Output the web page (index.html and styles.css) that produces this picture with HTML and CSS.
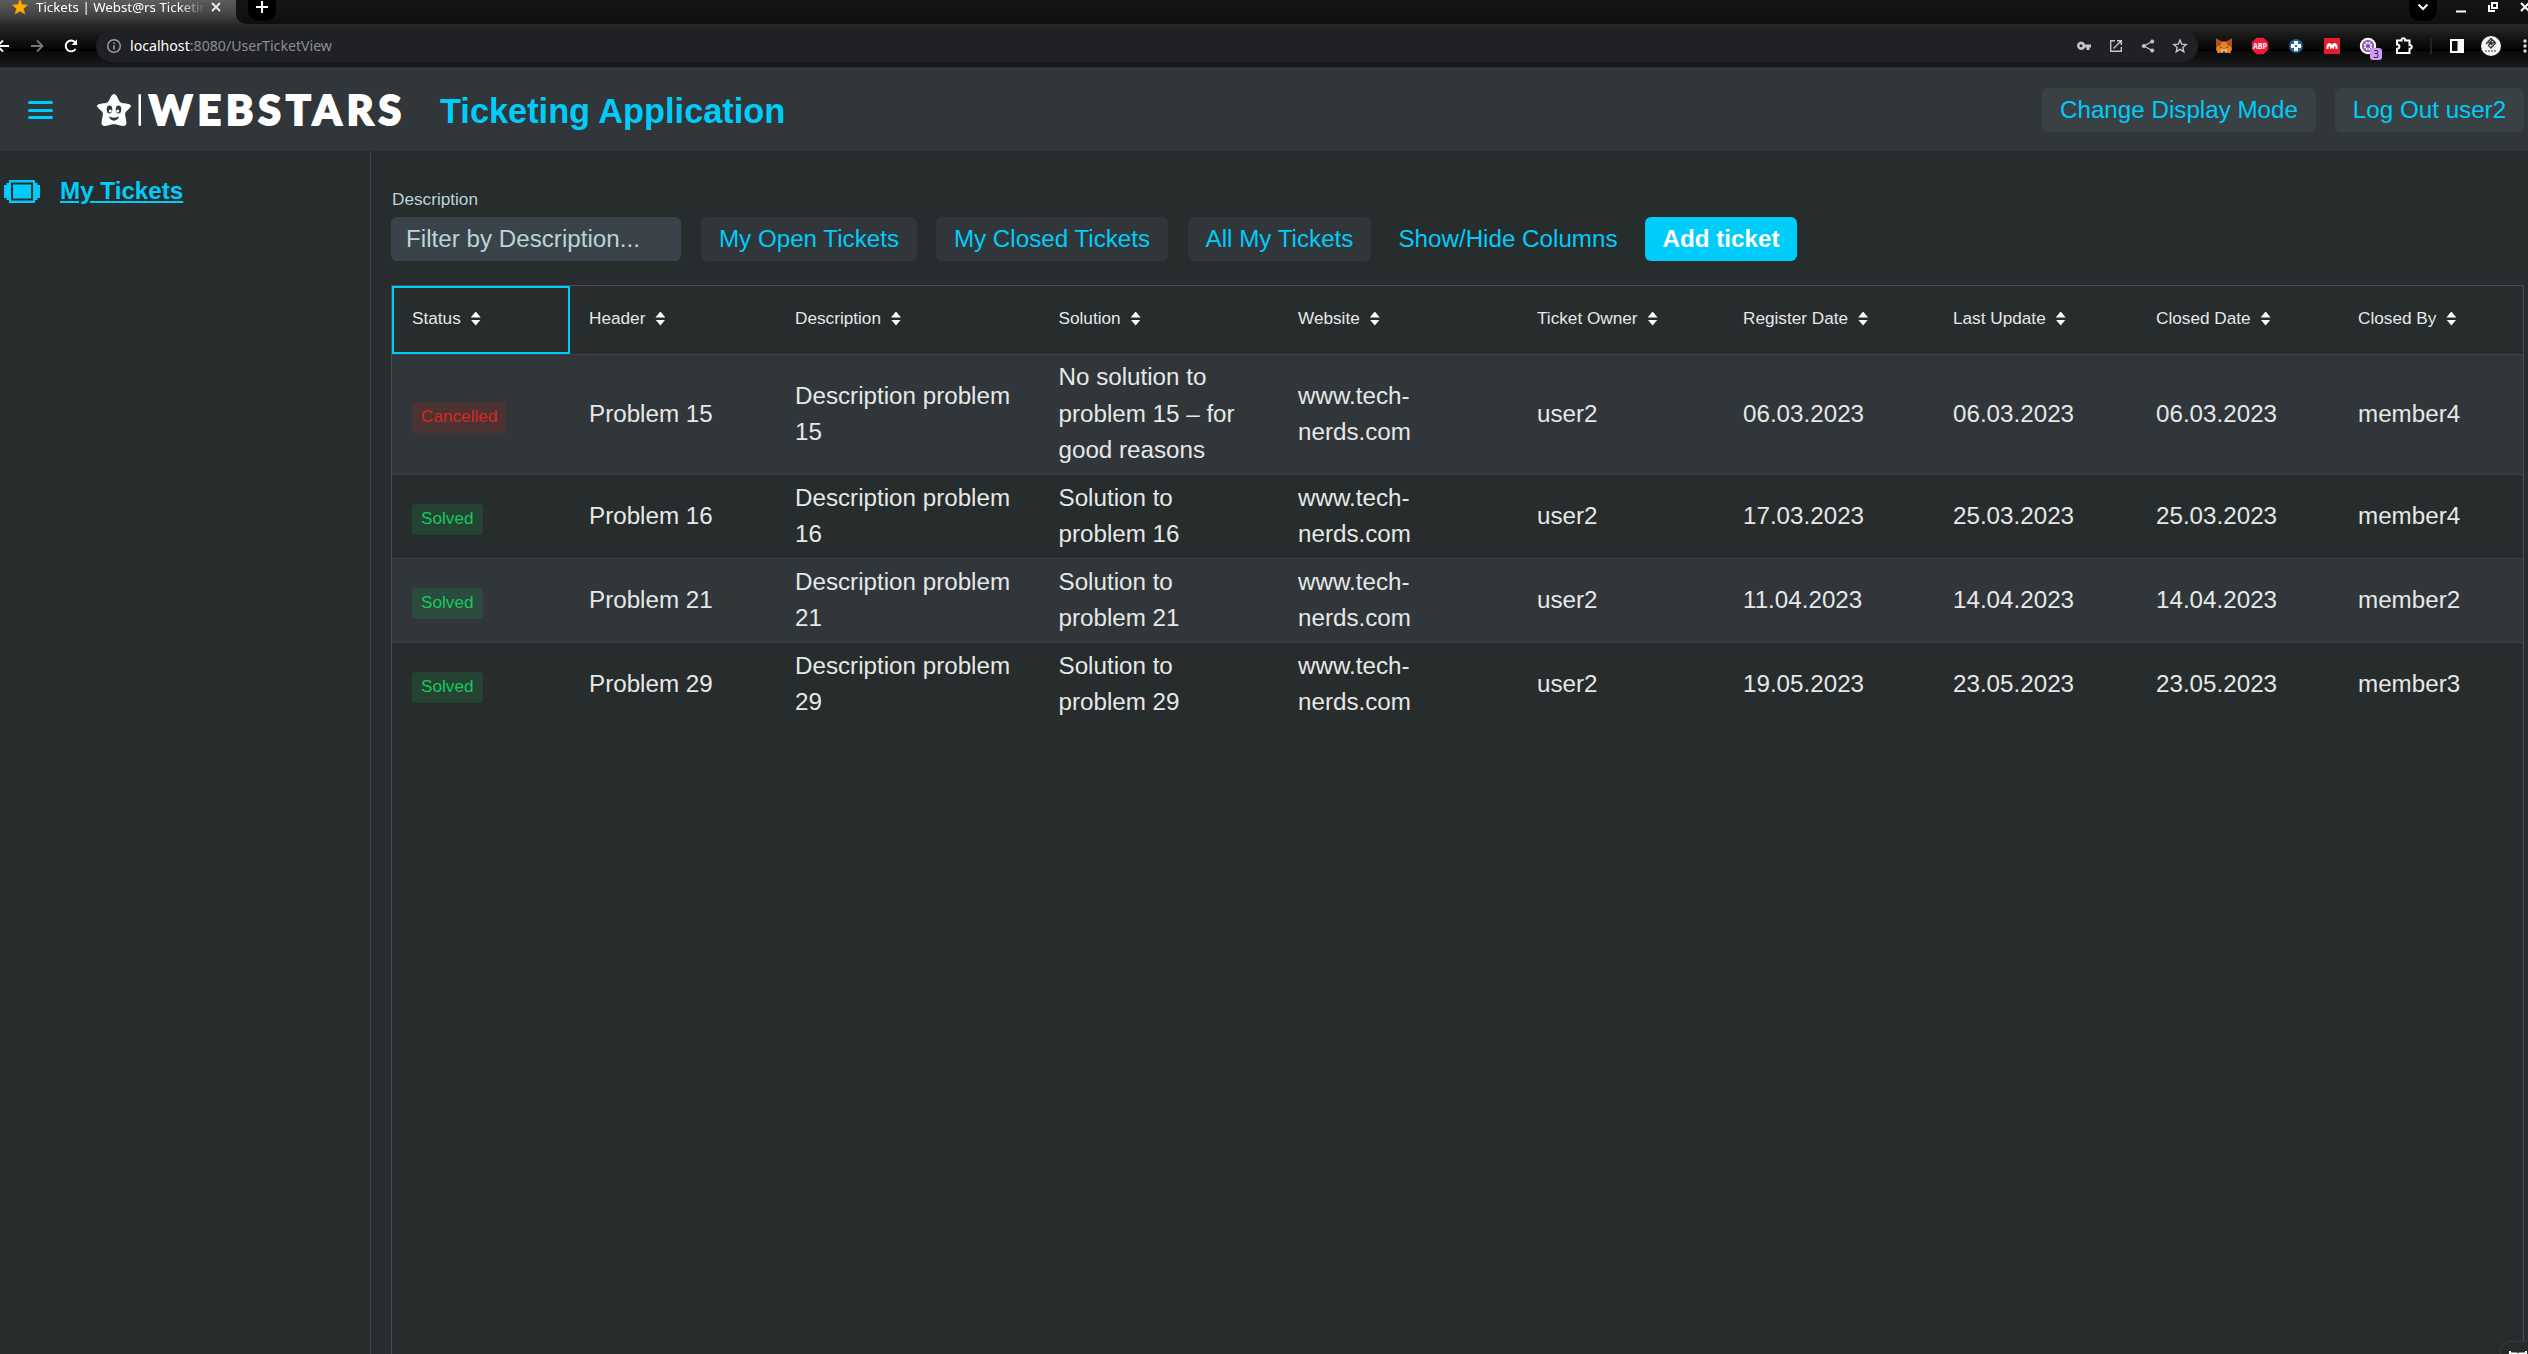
FILE: index.html
```html
<!DOCTYPE html>
<html lang="en">
<head>
<meta charset="utf-8">
<title>Tickets | Webst@rs Ticketing</title>
<link rel="stylesheet" href="styles.css">
</head>
<body>
<div class="browser">
  <div class="tabstrip">
    <div class="tab">
      <svg class="favicon" viewBox="0 0 16 16" width="16" height="16"><path d="M8 .8l2 4.900 5.300.4-4 3.400 1.300 5.200L8 11.900l-4.600 2.800 1.300-5.200-4-3.400 5.300-.4z" fill="#ffb300" stroke="#f59300"/></svg>
      <span class="tab-title">Tickets | Webst@rs Ticketing</span>
      <svg width="12" height="12" viewBox="0 0 12 12" stroke="#eee" stroke-width="1.8"><path d="M2 2l8 8M10 2l-8 8"/></svg>
    </div>
    <div class="strip-rest">
      <div class="round-btn"><svg width="14" height="14" viewBox="0 0 14 14" stroke="#fff" stroke-width="2"><path d="M7 1v12M1 7h12"/></svg></div>
      <div class="window-controls">
        <div class="round-btn"><svg width="12" height="12" viewBox="0 0 12 12" fill="none" stroke="#fff" stroke-width="2"><path d="M1.500 3.500L6 8l4.500-4.500"/></svg></div>
        <svg class="win" width="12" height="12" viewBox="0 0 12 12"><path d="M1 9.500h10v2H1z" fill="#fff"/></svg>
        <svg class="win" width="12" height="12" viewBox="0 0 12 12" fill="none" stroke="#fff" stroke-width="2"><path d="M5 2h5v5H5zM2 4v6h6"/></svg>
        <svg class="win" width="12" height="12" viewBox="0 0 12 12" stroke="#fff" stroke-width="2"><path d="M2 2l8 8M10 2l-8 8"/></svg>
      </div>
    </div>
  </div>
  <div class="addressbar">
    <div class="nav">
      <svg width="16" height="16" viewBox="0 0 16 16" fill="none" stroke="#fff" stroke-width="1.8"><path d="M14 8H3M8 2.500L2.500 8 8 13.500"/></svg>
      <svg width="16" height="16" viewBox="0 0 16 16" fill="none" stroke="#777" stroke-width="1.8"><path d="M2 8h11M8 2.500L13.500 8 8 13.500"/></svg>
      <svg width="16" height="16" viewBox="0 0 16 16"><path d="M12.600 11A5.400 5.400 0 1 1 12 4.200" fill="none" stroke="#fff" stroke-width="1.900"/><path d="M14 1.500v5.500H8.500z" fill="#fff"/></svg>
    </div>
    <div class="omnibox">
      <svg class="info" width="16" height="16" viewBox="0 0 16 16"><circle cx="8" cy="8" r="6.300" fill="none" stroke="#9aa0a6" stroke-width="1.400"/><path d="M7.200 7.200h1.600v4.300H7.200zM7.200 4.500h1.600v1.600H7.200z" fill="#9aa0a6"/></svg>
      <span class="url">localhost<span class="path">:8080/UserTicketView</span></span>
      <div class="omni-icons">
        <svg width="16" height="16" viewBox="0 0 16 16" fill="#c3c5c7"><path fill-rule="evenodd" d="M5 3.500a4.200 4.200 0 0 1 4 2.900h6v3.200h-1.500V12h-3V9.600H9A4.200 4.200 0 1 1 5 3.500zm0 2.800a1.500 1.500 0 1 0 0 3 1.500 1.500 0 0 0 0-3z"/></svg>
        <svg width="16" height="16" viewBox="0 0 16 16" fill="none" stroke="#c3c5c7" stroke-width="1.400"><path d="M7 2.700H2.700v10.600h10.600V9M9 2.700h4.300V7M13 3L5.500 10.500"/></svg>
        <svg width="16" height="16" viewBox="0 0 16 16" fill="#c3c5c7" stroke="#c3c5c7"><path d="M12 3.500L4 8l8 4.500" fill="none" stroke-width="1.300"/><circle cx="12.200" cy="3.500" r="1.600"/><circle cx="3.800" cy="8" r="1.600"/><circle cx="12.200" cy="12.500" r="1.600"/></svg>
        <svg width="16" height="16" viewBox="0 0 16 16" fill="none" stroke="#c3c5c7" stroke-width="1.400"><path d="M8 2l1.700 4.100 4.500.4-3.400 2.900 1 4.300L8 11.400l-3.800 2.300 1-4.300L1.800 6.500l4.500-.4z"/></svg>
      </div>
    </div>
    <div class="extensions">
      <svg width="18" height="18" viewBox="0 0 18 18"><path d="M1 1.500l5.500 3h5l5.500-3-.5 8 .5 3-2 4-4-1.500-2 1.500-2-1.500L3 16.500l-2-4 .5-3z" fill="#e8821e"/><path d="M1 1.500l5.500 3L5 9H1.500zM17 1.500l-5.500 3L13 9h3.500z" fill="#a8511d"/><path d="M6 12l3 1 3-1v4H6z" fill="#d5bfa9"/><path d="M5 9.500l2 1.500H5zM13 9.500L11 11h2zM7.500 14.500h3v1.500h-3z" fill="#233447"/></svg>
      <svg width="18" height="18" viewBox="0 0 18 18"><path d="M5.500.8h7L17.200 5.500v7l-4.700 4.700h-7L.8 12.500v-7z" fill="#f01c3c"/><text x="9" y="11.800" class="abp" textLength="14" lengthAdjust="spacingAndGlyphs">ABP</text></svg>
      <svg width="18" height="18" viewBox="0 0 18 18"><circle cx="9" cy="9" r="7" fill="#246591"/><path d="M7 4h4v3h3v4h-3v3H7v-3H4V7h3z" fill="#fff"/><path d="M8 8h2v2H8z" fill="#246591"/></svg>
      <svg width="18" height="18" viewBox="0 0 18 18"><path d="M1 1h16v16H1z" fill="#e51b2e"/><path d="M3.500 12V9.500C4 7 5 6 6.500 6S8.500 7.500 9 8c.5-.5 1-2 2.500-2s2.500 1 3 3.500V12h-2V9.500l-1-.5-.8 3H9.800L9 10l-.8 2H7.300l-.8-3-1 .5V12z" fill="#fff"/></svg>
      <span class="wheel-ext">
        <svg width="18" height="18" viewBox="0 0 18 18"><circle cx="9" cy="9" r="8.200" fill="#fff"/><circle cx="9" cy="9" r="5.200" fill="none" stroke="#7a3fb0" stroke-width="1.600"/><path d="M9 3v12M3 9h12M4.800 4.800l8.400 8.400M13.200 4.800l-8.400 8.400" stroke="#8d58bd"/><circle cx="9" cy="9" r="1.500" fill="#68369a"/></svg>
        <span class="ext-count">3</span>
      </span>
      <svg width="18" height="18" viewBox="0 0 18 18" fill="none" stroke="#fff" stroke-width="2"><path d="M2 3.500h4.500c-.3-3 4-3 3.700 0h4.300V8c3-.4 3 4 0 3.700V16H2v-4.200c3.200-.3 3.200-4 0-4.200z"/></svg>
    </div>
    <div class="bar-end">
      <i class="divider"></i>
      <svg width="14" height="14" viewBox="0 0 14 14"><path d="M0 0h14v14H0z" fill="#fff"/><path d="M2 2h5.500v10H2z" fill="#0b0b0b"/></svg>
      <svg width="20" height="20" viewBox="0 0 20 20"><circle cx="10" cy="10" r="10" fill="#f4f4f4"/><path d="M5 8l5-5.500L14.500 7 10 12 7.500 9.500 11 6M7.500 7.500l4-3.500M10 9l4-4" fill="none" stroke="#333" stroke-width="1.300"/><path d="M4 15h12" stroke="#777" stroke-width="1.500" stroke-dasharray="2 1"/></svg>
      <svg width="4" height="14" viewBox="0 0 4 14" fill="#ddd"><circle cx="2" cy="2" r="1.700"/><circle cx="2" cy="7" r="1.700"/><circle cx="2" cy="12" r="1.700"/></svg>
    </div>
  </div>
</div>

<header class="app-header">
  <div class="menu-toggle"><i></i><i></i><i></i></div>
  <svg class="logo" width="306" height="34" viewBox="0 0 306 34">
    <path d="M17 1c1.800 0 3 2.200 4 4.500 1.200 2.700 2 4 4 4.500 2.500.5 8.500.6 9 2.700.4 1.900-5 5-5.800 7.300-.7 2.500 2.300 9.500.8 11.700-1.500 2-4.500 1-6.500.5s-3.500-1-5.500-1-3.500.5-5.500 1-5 1.500-6.500-.5C3.500 29.500 6.500 22.500 5.800 20S-.4 14.600 0 12.700c.5-2.100 6.500-2.200 9-2.700 2-.5 2.800-1.800 4-4.500 1-2.300 2.200-4.500 4-4.500z" fill="#fff"/>
    <ellipse cx="12.500" cy="16.500" rx="2.800" ry="4" fill="#303639"/><ellipse cx="21.500" cy="16.500" rx="2.800" ry="4" fill="#303639"/>
    <circle cx="13.300" cy="18" r="1.500" fill="#fff"/><circle cx="20.700" cy="18" r="1.500" fill="#fff"/>
    <path d="M12 23.500c3 1.500 7 1.500 10 0-1 5.500-9 5.500-10 0z" fill="#303639"/>
    <rect x="41.500" y="1" width="2.500" height="32" rx="1.200" fill="#fff"/>
    <text class="wordmark" x="52" y="31.500" textLength="252">WEBSTARS</text>
  </svg>
  <h1>Ticketing Application</h1>
  <div class="header-actions">
    <button class="btn raised mode">Change Display Mode</button>
    <button class="btn raised logout">Log Out user2</button>
  </div>
</header>

<div class="app-body">
  <nav class="drawer">
    <a class="nav-item">
      <svg width="36" height="23" viewBox="0 0 36 23"><path fill-rule="evenodd" d="M5 0h26v3h2.500v2H36v13h-2.500v2H31v3H5v-3H2.500v-2H0V5h2.500V3H5zM7 2.500v18h22v-18z" fill="#00ccfa"/><path d="M9 4.500h18v14H9z" fill="#00ccfa"/></svg>
      <span>My Tickets</span>
    </a>
  </nav>
  <main>
    <div class="toolbar">
      <label class="field"><span class="field-label">Description</span><span class="field-input">Filter by Description...</span></label>
      <button class="btn w-open">My Open Tickets</button>
      <button class="btn w-closed">My Closed Tickets</button>
      <button class="btn w-all">All My Tickets</button>
      <button class="btn tertiary">Show/Hide Columns</button>
      <button class="btn primary">Add ticket</button>
    </div>
    <div class="grid">
      <div class="row head">
        <div class="focused">Status<i class="sort"></i></div><div>Header<i class="sort"></i></div><div>Description<i class="sort"></i></div><div>Solution<i class="sort"></i></div><div>Website<i class="sort"></i></div><div>Ticket Owner<i class="sort"></i></div><div>Register Date<i class="sort"></i></div><div>Last Update<i class="sort"></i></div><div>Closed Date<i class="sort"></i></div><div>Closed By<i class="sort"></i></div>
      </div>
      <div class="row odd tall">
        <div><p><span class="badge error">Cancelled</span></p></div><div>Problem 15</div><div>Description problem 15</div><div>No solution to problem 15 – for good reasons</div><div>www.tech-nerds.com</div><div>user2</div><div>06.03.2023</div><div>06.03.2023</div><div>06.03.2023</div><div>member4</div>
      </div>
      <div class="row">
        <div><p><span class="badge">Solved</span></p></div><div>Problem 16</div><div>Description problem 16</div><div>Solution to problem 16</div><div>www.tech-nerds.com</div><div>user2</div><div>17.03.2023</div><div>25.03.2023</div><div>25.03.2023</div><div>member4</div>
      </div>
      <div class="row odd">
        <div><p><span class="badge">Solved</span></p></div><div>Problem 21</div><div>Description problem 21</div><div>Solution to problem 21</div><div>www.tech-nerds.com</div><div>user2</div><div>11.04.2023</div><div>14.04.2023</div><div>14.04.2023</div><div>member2</div>
      </div>
      <div class="row last">
        <div><p><span class="badge">Solved</span></p></div><div>Problem 29</div><div>Description problem 29</div><div>Solution to problem 29</div><div>www.tech-nerds.com</div><div>user2</div><div>19.05.2023</div><div>23.05.2023</div><div>23.05.2023</div><div>member3</div>
      </div>
    </div>
  </main>
</div>
<div class="corner-widget"><svg width="18" height="4" viewBox="0 0 18 4"><path d="M0 0h2v1.500h6l1 1 1-1h6V0h2v4H0z" fill="#fff"/></svg></div>
</body>
</html>
```
FILE: styles.css
```css
* { box-sizing: border-box; }
body {
  margin: 0;
  height: 1354px;
  overflow: hidden;
  display: flex;
  flex-direction: column;
  background: #272c2c;
  color: #e6e8e8;
  font: 24.2px/36.4px "Liberation Sans", Arial, sans-serif;
}
svg { display: block; flex: none; }
p { margin: 0; }

/* Browser chrome */
.browser {
  height: 69px;
  flex: none;
  display: flex;
  flex-direction: column;
  background: linear-gradient(#5c5c5c 0, #454545 14px, #2b2b2b 24px, #141414 38px, #060606 49px, #000 50px, #0b0b0b 52px, #1a1a1a 67px, #3b3b3b 68px);
  font-family: "Noto Sans", sans-serif;
}
.tabstrip { height: 24px; display: flex; }
.tab {
  width: 236px;
  flex: none;
  display: flex;
  align-items: flex-start;
  padding-left: 12px;
}
.favicon { margin-top: -1px; }
.tab-title {
  width: 176px;
  margin: -6px -2px 0 8px;
  white-space: nowrap;
  font-size: 13.3px;
  line-height: 26px;
  color: #fff;
  -webkit-mask-image: linear-gradient(90deg, #000 142px, transparent 170px);
  mask-image: linear-gradient(90deg, #000 142px, transparent 170px);
}
.tab svg:last-child { margin-top: 1px; }
.strip-rest {
  flex: 1;
  display: flex;
  justify-content: space-between;
  padding-left: 12px;
  border-bottom-left-radius: 10px;
  background: linear-gradient(#151515, #0e0e0e);
}
.round-btn {
  width: 28px;
  height: 21px;
  flex: none;
  display: flex;
  justify-content: center;
  background: #000;
  border-radius: 0 0 11px 11px;
}
.window-controls { display: flex; width: 119px; }
.window-controls .round-btn { margin-right: 18px; padding-top: 1px; }
.win { margin: 1px 20px 0 0; }
.addressbar { height: 44px; display: flex; align-items: center; }
.nav { width: 101px; flex: none; display: flex; gap: 18px; margin-left: -5px; }
.omnibox {
  width: 2102px;
  height: 32px;
  flex: none;
  display: flex;
  align-items: center;
  border-radius: 16px;
  background: #202124;
  padding: 0 2px 0 10px;
}
.url { margin-left: 8px; font-size: 14.150px; line-height: 30px; color: #fff; }
.path { color: #8b8e91; }
.omni-icons { margin-left: auto; display: flex; gap: 16px; padding-right: 8px; }
.extensions { display: flex; gap: 18px; margin-left: 17px; }
.abp { font: bold 8px "Open Sans", sans-serif; fill: #fff; text-anchor: middle; }
.wheel-ext { position: relative; }
.ext-count {
  position: absolute;
  left: 11px;
  top: 11px;
  width: 12px;
  height: 12px;
  border-radius: 3px;
  background: #d29bfb;
  color: #222;
  font-size: 10px;
  line-height: 12px;
  text-align: center;
}
.bar-end { display: flex; align-items: center; }
.divider { width: 2px; height: 16px; margin: 0 18px 0 17px; background: #222; }
.bar-end svg:nth-of-type(1) { margin-right: 17px; }
.bar-end svg:nth-of-type(2) { margin-right: 22px; }

/* Application header */
.app-header {
  height: 82px;
  flex: none;
  display: flex;
  align-items: center;
  background: #303639;
  padding: 0 4px 0 28px;
}
.menu-toggle { width: 25px; display: flex; flex-direction: column; gap: 4.500px; }
.menu-toggle i { height: 3px; border-radius: 1.500px; background: #00ccfa; }
.logo { margin-left: 44px; overflow: visible; }
.wordmark {
  font: 900 41px Lato, sans-serif;
  fill: #fff;
  stroke: #fff;
  stroke-width: 2px;
}
h1 {
  margin: 1px 0 0 37px;
  font-size: 34.350px;
  line-height: 40px;
  color: #00ccfa;
}
.header-actions { margin-left: auto; display: flex; gap: 19px; }
.btn {
  height: 44px;
  padding: 0;
  border: 0;
  border-radius: 6px;
  background: #303639;
  color: #00ccfa;
  font: 24.2px/44px "Liberation Sans", Arial, sans-serif;
  white-space: nowrap;
}
.btn.raised { background: #3a4144; }
.mode { width: 274px; }
.logout { width: 189px; }

/* Drawer and content */
.app-body { flex: 1; display: flex; min-height: 0; }
.drawer { width: 371px; flex: none; border-right: 1px solid #3c4347; padding: 22px 0 0 4px; }
.nav-item {
  display: flex;
  align-items: center;
  gap: 20px;
  color: #00ccfa;
  font-weight: bold;
  text-decoration: underline;
}
main { flex: 1; display: flex; flex-direction: column; padding-left: 20px; padding-right: 4px; }
.toolbar { height: 110px; flex: none; display: flex; align-items: flex-end; margin-bottom: 24px; }
.field { width: 290px; margin-right: 20px; display: flex; flex-direction: column; }
.field-label { padding-left: 1px; font-size: 17.2px; line-height: 26px; margin-bottom: 5px; color: #bad4d8; }
.field-input {
  height: 44px;
  padding-left: 15px;
  border-radius: 6px;
  background: #3b434a;
  color: #bad4d8;
  line-height: 43px;
}
.w-open { width: 216px; margin-right: 19px; }
.w-closed { width: 232px; margin-right: 20px; }
.w-all { width: 183px; }
.btn.tertiary { background: none; width: 274px; }
.btn.primary { width: 152px; background: #00ccfa; color: #fff; font-weight: bold; }

/* Ticket grid */
.grid { flex: 1; border: 1px solid #464f55; border-bottom: 0; }
.row {
  height: 84px;
  display: grid;
  grid-template-columns: 178px 206px 263.5px 239.5px 239px 206px 210px 203px 202px 1fr;
  border-bottom: 1px solid #3a4246;
}
.row > div { display: flex; align-items: center; padding: 0 20px 1px 19px; }
.row > div:first-child { padding-left: 20px; }
.row.odd { background: #303639; }
.row.tall { height: 120px; }
.row.last { border-bottom-color: transparent; }
.row.head { height: 69px; font-size: 17.2px; }
.row.head > div { padding-bottom: 3px; }
.row.head > .focused { border: 2px solid #00ccfa; padding: 0 0 3px 18px; }
.sort { width: 10px; height: 14px; margin-left: 10px; }
.sort::before, .sort::after {
  content: "";
  display: block;
  width: 10px;
  height: 6px;
  background: #fff;
  clip-path: polygon(50% 0, 100% 100%, 0 100%);
}
.sort::after { margin-top: 2px; clip-path: polygon(0 0, 100% 0, 50% 100%); }
.badge {
  display: inline-block;
  height: 31px;
  padding: 0 9px;
  border-radius: 4px;
  background: rgba(23, 201, 92, 0.15);
  color: #17c95c;
  font-size: 17.2px;
  line-height: 29px;
}
.badge.error { background: rgba(214, 40, 30, 0.17); color: #d6281e; }

.corner-widget {
  position: absolute;
  right: 0;
  bottom: 0;
  width: 28px;
  height: 13px;
  padding: 9px 0 0 8px;
  border-top: 1px solid #343a3b;
  border-left: 1px solid #343a3b;
  border-top-left-radius: 10px;
  background: #262b2b;
  overflow: hidden;
}
```
